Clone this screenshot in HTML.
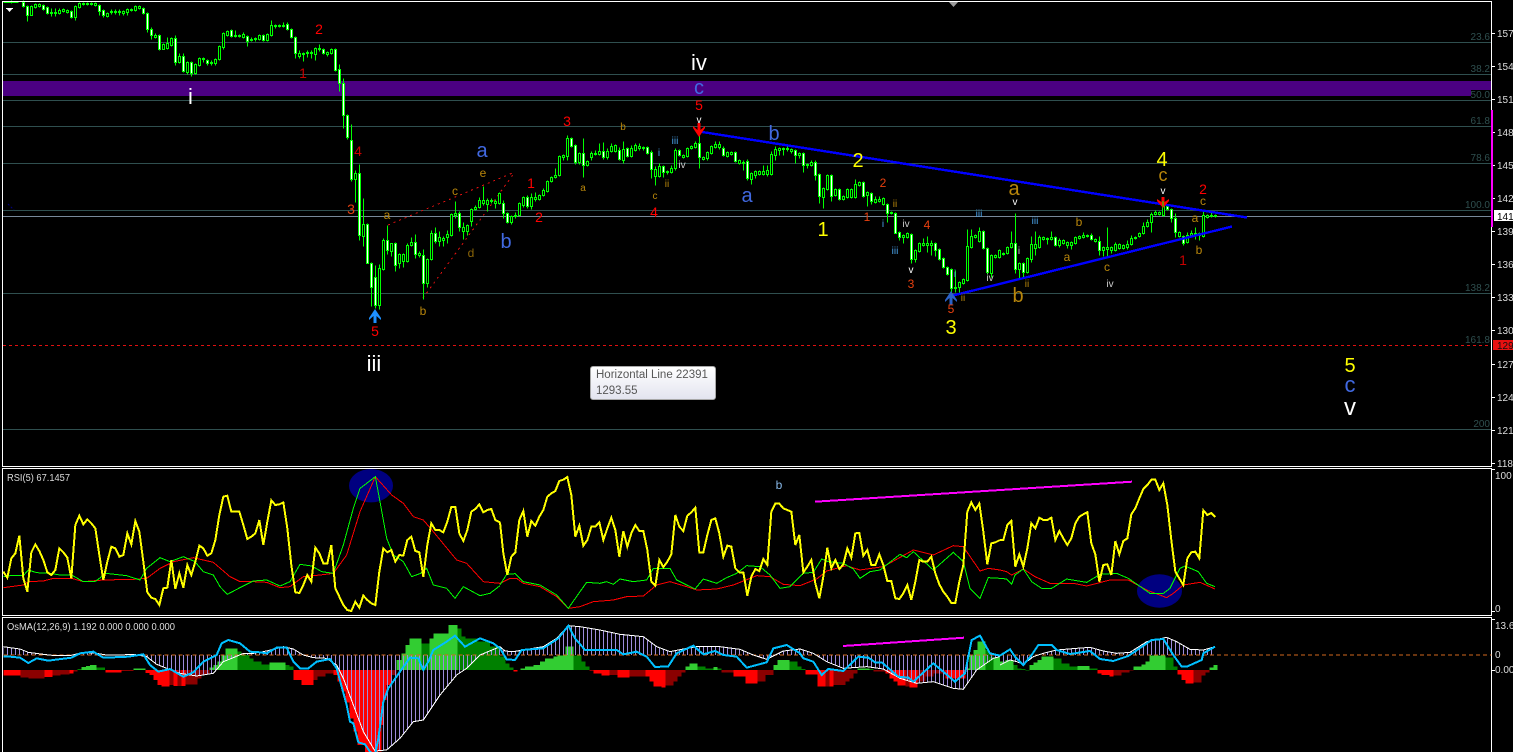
<!DOCTYPE html>
<html>
<head>
<meta charset="utf-8">
<title>Chart</title>
<style>
html,body{margin:0;padding:0;background:#000;width:1513px;height:752px;overflow:hidden}
svg{position:absolute;left:0;top:0;display:block}
text{font-family:"Liberation Sans",sans-serif;text-anchor:middle}
polyline,.al{shape-rendering:crispEdges}
.o{fill:#b8860b}.r{fill:#f00}.dr{fill:#c80000}.y{fill:#ff0}.b{fill:#4169e1}.w{fill:#fff}.lb{fill:#4aa3e8}.g{fill:#ccc}.or{fill:#e8400f}
.s10{font-size:10px}.s12{font-size:12px}.s14{font-size:14px}.s20{font-size:20px}.s22{font-size:22px}
.ax{font-size:10px;fill:#ddd;text-anchor:start}
.fb{font-size:10px;fill:#2f4f4f;text-anchor:end}
.tt{font-size:10px;fill:#ddd;text-anchor:start}
#tip{position:absolute;left:590px;top:366px;width:119px;height:32px;border:1px solid #a8a8a8;border-radius:3px;background:linear-gradient(#fff,#e3e4ef);font:11.5px/15px "Liberation Sans",sans-serif;color:#575757;padding:0 0 0 5px;box-sizing:content-box;white-space:nowrap}
#tip div{height:15px;padding-top:1px}
</style>
</head>
<body>
<svg width="1513" height="752" viewBox="0 0 1513 752" xmlns="http://www.w3.org/2000/svg">
<defs>
<pattern id="st" width="12" height="30" patternUnits="userSpaceOnUse"><rect x="9" y="0" width="3" height="30" fill="#9d8bdc"/></pattern>
</defs>
<rect width="1513" height="752" fill="#000"/>
<rect x="3" y="81" width="1488" height="15" fill="#4b0082"/>
<g stroke="#2f4f4f" shape-rendering="crispEdges">
<path d="M3 42.5H1491M3 74.5H1491M3 100.5H1491M3 126.5H1491M3 163.5H1491M3 210.5H1491M3 293.5H1491M3 429.5H1491"/>
</g>
<path d="M3 216.5H1491" stroke="#778899" shape-rendering="crispEdges"/>
<path d="M3 345.5H1491" stroke="#e01010" stroke-dasharray="3 3" shape-rendering="crispEdges"/>
<path d="M8 204L14 210" stroke="#000080" stroke-dasharray="2 2"/>
<path class="al" d="M388 225L515 172M423 298L515 172" stroke="#e01010" stroke-dasharray="2 4" fill="none"/>
<rect x="1471" y="90" width="20" height="9" fill="#000"/>

<g transform="translate(.5,.5)" shape-rendering="crispEdges" stroke="#0f0" stroke-width="1">
<path fill="none" d="M3 2H18M11 0V3M23 0V7M27 5V21M31 5V15M35 3V8M39 3V7M43 4V10M47 6V14M51 8V16M55 8V16M59 8V14M63 8V12M67 9V13M71 10V18M75 5V20M79 2V8M83 2V5M87 2V5M91 2V5M95 2V6M99 4V15M103 9V17M107 12V17M111 9V14M115 9V14M119 9V15M123 10V15M127 8V15M131 8V11M135 5V11M139 5V9M143 7V14M147 12V32M151 27V39M155 33V38M159 34V50M163 43V49M167 37V49M171 37V46M175 35V65M179 53V63M183 53V72M187 61V74M191 61V76M195 63V74M199 57V66M203 57V62M207 59V65M211 60V65M215 58V65M219 45V60M223 32V49M227 30V36M231 29V37M235 30V37M239 34V37M243 32V38M247 35V46M251 37V41M255 37V41M259 34V40M263 34V41M267 33V41M271 20V36M275 24V28M279 24V27M283 22V27M287 22V30M291 28V38M295 36V58M299 50V58M303 52V61M307 50V57M311 50V58M315 47V60M319 44V51M323 48V54M327 51V56M331 48V54M335 48V71M339 64V91M343 78V128M347 114V139M351 124V181M355 170V202M359 164V240M363 198V246M367 223V263M371 262V306M375 265V308M379 264V309M383 238V270M387 225V254M391 243V256M395 242V271M399 253V268M403 253V267M407 243V262M411 237V246M415 234V258M419 251V257M423 249V299M427 258V287M431 230V260M435 227V243M439 231V246M443 236V246M447 230V243M451 213V236M455 201V218M459 211V231M463 222V239M467 224V235M471 208V226M475 205V210M479 197V208M483 186V205M487 198V211M491 198V203M495 199V208M499 192V204"/>
<path fill="none" d="M503 200V218M507 212V223M511 215V224M515 212V218M519 202V216M523 196V207M527 195V208M531 193V209M535 192V201M539 194V200M543 188V196M547 180V192M551 176V182M555 168V178M559 155V176M563 154V160M567 135V160M571 137V147M575 144V164M579 152V164M583 138V177M587 160V166M591 151V160M595 150V155M599 143V155M603 142V159M607 148V159M611 143V152M615 144V152M619 147V160M623 141V163M627 147V157M631 145V157M635 143V151M639 143V150M643 146V150M647 146V154M651 150V178M655 166V185M659 163V177M663 165V177M667 170V174M671 165V173M675 148V170M679 149V156M683 154V158M687 147V157M691 145V149M695 141V148M699 125V168M703 156V160M707 151V160M711 145V154M715 141V148M719 141V149M723 146V156M727 151V157M731 151V155M735 151V162M739 159V164M743 160V170M747 159V180M751 172V184M755 170V178M759 170V175M763 165V175M767 165V176M771 151V175M775 146V160M779 147V155M783 147V155M787 145V151M791 148V153M795 149V163M799 152V158M803 152V172M807 163V168M811 160V166M815 160V180M819 173V203M823 187V208M827 174V190M831 174V201M835 188V196M839 188V200M843 195V200M847 188V198M851 188V198M855 179V198M859 181V186M863 181V197M867 191V206M871 192V204M875 196V203M879 196V202M883 197V205M887 203V222M891 211V214M895 212V233M899 231V240M903 234V243M907 232V238M911 233V263M915 249V262M919 242V252M923 238V246M927 236V252M931 240V255M935 242V256M939 248V260M943 257V268M947 266V275M951 268V295M955 270V292M959 281V292M963 278V284M967 229V281M971 229V248M975 234V238M979 227V242M983 230V249M987 247V274M991 254V277M995 254V258M999 249V258"/>
<path fill="none" d="M1003 252V255M1007 246V254M1011 231V248M1015 213V273M1019 262V279M1023 262V277M1027 257V273M1031 236V262M1035 231V255M1039 235V248M1043 236V240M1047 237V244M1051 231V240M1055 236V246M1059 238V247M1063 239V244M1067 241V248M1071 241V249M1075 236V244M1079 235V239M1083 232V238M1087 234V237M1091 233V240M1095 238V242M1099 236V255M1103 246V256M1107 227V258M1111 246V253M1115 242V251M1119 243V249M1123 244V249M1127 240V249M1131 235V245M1135 236V239M1139 232V237M1143 222V234M1147 219V227M1151 212V232M1155 210V215M1159 211V215M1163 200V216M1167 205V210M1171 208V222M1175 213V237M1179 231V237M1183 235V245M1187 232V243M1191 230V236M1195 227V239M1199 232V240M1203 210V237M1207 214V218M1211 212V217M1215 214V217"/>
<path fill="#000" d="M30 6h2v9h-2zM34 4h2v3h-2zM38 4h2v2h-2zM50 12h2v1h-2zM54 12h2v1h-2zM58 10h2v3h-2zM62 9h2v2h-2zM66 10h2v2h-2zM74 6h2v11h-2zM78 3h2v4h-2zM82 3h2v1h-2zM86 3h2v1h-2zM90 3h2v1h-2zM94 3h2v2h-2zM106 13h2v3h-2zM110 11h2v1h-2zM114 11h2v1h-2zM118 11h2v1h-2zM122 11h2v2h-2zM126 9h2v3h-2zM130 9h2v1h-2zM134 6h2v4h-2zM138 6h2v2h-2zM154 35h2v2h-2zM162 44h2v5h-2zM166 43h2v5h-2zM170 38h2v7h-2zM178 56h2v6h-2zM186 62h2v10h-2zM194 64h2v9h-2zM198 58h2v7h-2zM202 58h2v1h-2zM210 62h2v1h-2zM214 59h2v4h-2zM218 46h2v13h-2zM222 33h2v14h-2zM226 31h2v4h-2zM234 35h2v1h-2zM238 35h2v1h-2zM242 34h2v3h-2zM250 39h2v1h-2zM254 38h2v1h-2zM258 35h2v4h-2zM266 34h2v6h-2zM270 25h2v10h-2zM274 25h2v1h-2zM278 25h2v1h-2zM282 25h2v1h-2zM298 53h2v3h-2zM302 53h2v1h-2zM306 52h2v1h-2zM310 52h2v1h-2zM314 48h2v6h-2zM318 48h2v1h-2zM326 52h2v2h-2zM330 49h2v4h-2zM354 173h2v6h-2zM362 224h2v12h-2zM378 268h2v37h-2zM382 240h2v29h-2zM390 243h2v8h-2zM398 254h2v9h-2zM402 254h2v7h-2zM406 245h2v16h-2zM410 242h2v3h-2zM418 253h2v2h-2zM426 259h2v24h-2zM430 233h2v26h-2zM438 237h2v4h-2zM442 238h2v2h-2zM446 234h2v3h-2zM450 214h2v21h-2zM454 213h2v2h-2zM462 227h2v4h-2zM466 225h2v6h-2zM470 209h2v12h-2zM474 207h2v2h-2zM478 200h2v7h-2zM482 200h2v3h-2zM486 200h2v4h-2zM490 200h2v1h-2zM494 201h2v2h-2zM498 193h2v10h-2z"/>
<path fill="#000" d="M510 216h2v6h-2zM514 215h2v1h-2zM518 203h2v12h-2zM522 197h2v8h-2zM530 197h2v9h-2zM534 197h2v2h-2zM538 195h2v4h-2zM542 190h2v5h-2zM546 181h2v10h-2zM550 177h2v4h-2zM554 175h2v2h-2zM558 156h2v19h-2zM562 155h2v2h-2zM566 138h2v18h-2zM578 153h2v9h-2zM586 161h2v4h-2zM590 153h2v4h-2zM594 153h2v1h-2zM598 151h2v3h-2zM606 151h2v6h-2zM610 146h2v5h-2zM614 145h2v6h-2zM622 149h2v11h-2zM630 148h2v8h-2zM634 145h2v5h-2zM638 146h2v2h-2zM642 147h2v1h-2zM654 169h2v7h-2zM658 166h2v10h-2zM666 171h2v1h-2zM670 168h2v4h-2zM674 150h2v18h-2zM682 155h2v2h-2zM686 148h2v8h-2zM690 146h2v2h-2zM694 143h2v4h-2zM702 157h2v2h-2zM706 152h2v6h-2zM710 146h2v7h-2zM714 144h2v3h-2zM718 144h2v3h-2zM726 152h2v4h-2zM730 152h2v2h-2zM738 160h2v3h-2zM742 162h2v1h-2zM750 173h2v6h-2zM754 171h2v4h-2zM758 171h2v3h-2zM762 171h2v3h-2zM766 170h2v4h-2zM770 154h2v20h-2zM774 149h2v6h-2zM778 148h2v2h-2zM782 148h2v1h-2zM786 148h2v1h-2zM790 149h2v2h-2zM798 153h2v2h-2zM806 164h2v1h-2zM810 162h2v3h-2zM822 188h2v9h-2zM826 175h2v14h-2zM834 189h2v6h-2zM842 196h2v3h-2zM846 189h2v8h-2zM850 189h2v8h-2zM854 184h2v13h-2zM858 182h2v3h-2zM866 192h2v3h-2zM874 199h2v3h-2zM878 199h2v2h-2zM882 198h2v6h-2zM890 212h2v1h-2zM902 235h2v2h-2zM906 233h2v4h-2zM914 250h2v9h-2zM918 243h2v8h-2zM922 243h2v2h-2zM926 243h2v2h-2zM930 243h2v2h-2zM954 287h2v1h-2zM958 282h2v5h-2zM962 279h2v4h-2zM966 246h2v34h-2zM970 236h2v11h-2zM974 235h2v2h-2zM978 231h2v10h-2zM990 255h2v18h-2zM994 255h2v2h-2zM998 250h2v7h-2z"/>
<path fill="#000" d="M1002 253h2v1h-2zM1006 247h2v6h-2zM1010 243h2v4h-2zM1018 263h2v6h-2zM1026 258h2v14h-2zM1030 244h2v15h-2zM1034 244h2v4h-2zM1038 237h2v10h-2zM1042 237h2v2h-2zM1046 238h2v1h-2zM1050 237h2v2h-2zM1058 240h2v5h-2zM1062 240h2v3h-2zM1066 242h2v3h-2zM1070 242h2v3h-2zM1074 237h2v6h-2zM1078 236h2v2h-2zM1082 235h2v2h-2zM1086 235h2v1h-2zM1094 239h2v2h-2zM1102 247h2v3h-2zM1106 247h2v2h-2zM1110 247h2v3h-2zM1114 244h2v6h-2zM1118 244h2v4h-2zM1122 245h2v3h-2zM1126 244h2v3h-2zM1130 238h2v6h-2zM1134 237h2v1h-2zM1138 233h2v3h-2zM1142 226h2v7h-2zM1146 222h2v4h-2zM1150 214h2v8h-2zM1154 212h2v2h-2zM1158 212h2v2h-2zM1162 206h2v9h-2zM1178 232h2v4h-2zM1186 235h2v7h-2zM1190 233h2v2h-2zM1194 233h2v1h-2zM1198 233h2v2h-2zM1202 215h2v21h-2zM1206 215h2v2h-2zM1210 215h2v1h-2zM1214 215h2v1h-2z"/>
<path fill="#fff" d="M22 2h2v4h-2zM26 6h2v9h-2zM42 5h2v4h-2zM46 7h2v6h-2zM70 11h2v6h-2zM98 5h2v6h-2zM102 10h2v5h-2zM142 8h2v5h-2zM146 13h2v16h-2zM150 29h2v6h-2zM158 35h2v14h-2zM174 38h2v24h-2zM182 56h2v15h-2zM190 62h2v11h-2zM206 60h2v3h-2zM230 30h2v6h-2zM246 36h2v5h-2zM262 35h2v5h-2zM286 24h2v5h-2zM290 29h2v8h-2zM294 37h2v16h-2zM322 49h2v4h-2zM334 49h2v21h-2zM338 69h2v14h-2zM342 83h2v32h-2zM346 115h2v22h-2zM350 140h2v39h-2zM358 173h2v62h-2zM366 224h2v39h-2zM370 263h2v24h-2zM374 277h2v28h-2zM386 240h2v10h-2zM394 243h2v22h-2zM414 242h2v12h-2zM422 255h2v28h-2zM434 233h2v8h-2zM458 213h2v14h-2zM502 203h2v10h-2zM506 213h2v9h-2zM526 197h2v9h-2zM570 138h2v8h-2zM574 145h2v17h-2zM582 153h2v12h-2zM602 151h2v6h-2zM618 150h2v9h-2zM626 148h2v8h-2zM646 147h2v6h-2zM650 152h2v17h-2zM662 166h2v6h-2zM678 150h2v5h-2zM698 143h2v14h-2zM722 148h2v7h-2zM734 152h2v9h-2zM746 161h2v17h-2zM794 150h2v5h-2zM802 153h2v12h-2zM814 162h2v13h-2zM818 174h2v22h-2zM830 175h2v21h-2zM838 189h2v10h-2zM862 182h2v14h-2zM870 193h2v8h-2zM886 204h2v9h-2zM894 213h2v20h-2zM898 232h2v5h-2zM910 234h2v25h-2zM934 243h2v7h-2zM938 249h2v10h-2zM942 258h2v9h-2zM946 267h2v7h-2zM950 269h2v19h-2zM982 231h2v17h-2zM986 248h2v24h-2zM1014 243h2v26h-2zM1022 263h2v9h-2zM1054 237h2v8h-2zM1090 235h2v4h-2zM1098 241h2v9h-2zM1166 206h2v3h-2zM1170 209h2v9h-2zM1174 218h2v14h-2zM1182 236h2v7h-2z"/>
</g>

<path class="al" d="M699 131.5L1247 217.5" stroke="#0000ff" stroke-width="2.4" fill="none"/>
<path class="al" d="M951 296L1232 226.5" stroke="#0000ff" stroke-width="2.4" fill="none"/>

<!-- arrows -->
<path d="M375 309L381 318V320L376.5 316V323H373.5V316L369 320V318Z" fill="#1e90ff"/>
<path d="M951 291L957 300V302L952.5 298V305H949.5V298L945 302V300Z" fill="#2a62c8"/>
<path d="M699 137L693 128V126L697.5 130V123H700.5V130L705 126V128Z" fill="#f00"/>
<path d="M1163 208L1157 201V199L1161.5 202V197H1164.5V202L1169 199V201Z" fill="#f00"/>
<path d="M1163 206.5V201" stroke="#0f0"/>

<!-- big labels -->
<text x="190.500" y="104" class="w s22">i</text>
<text x="699" y="70" class="w s22">iv</text>
<text x="374" y="371" class="w s22">iii</text>
<text x="1350" y="415" class="w" font-size="24">v</text>
<text x="1350" y="392" class="b s22">c</text>
<text x="1350" y="372" class="y s20">5</text>
<text x="699" y="94" class="b s20">c</text>
<text x="699" y="110" class="r s14">5</text>
<text x="699" y="123" class="w s10">v</text>
<text x="567" y="126" class="r s14">3</text>
<text x="623" y="130" class="o s10">b</text>
<text x="675" y="144" class="lb s10">iii</text>
<text x="659" y="156" class="lb s10">i</text>
<text x="682" y="168" class="g s10">iv</text>
<text x="667" y="187" class="o s10">ii</text>
<text x="655" y="199" class="o s10">c</text>
<text x="654" y="217" class="r s14">4</text>
<text x="531" y="188" class="r s14">1</text>
<text x="539" y="222" class="r s14">2</text>
<text x="583" y="191" class="o s10">a</text>
<text x="506" y="248" class="b s20">b</text>
<text x="482" y="157" class="b s20">a</text>
<text x="483" y="177" class="o s12">e</text>
<text x="455" y="195" class="o s12">c</text>
<text x="387" y="219" class="o s12">a</text>
<text x="471" y="257" class="s12" fill="#8b6508">d</text>
<text x="423" y="315" class="o s12">b</text>
<text x="375" y="336" class="r s14">5</text>
<text x="319" y="34" class="r s14">2</text>
<text x="303" y="78" class="dr s14">1</text>
<text x="358" y="156" class="dr s14">4</text>
<text x="351" y="214" class="or s14">3</text>
<text x="774" y="140" class="b s20">b</text>
<text x="747" y="202" class="b s20">a</text>
<text x="858" y="167" class="y s20">2</text>
<text x="823" y="236" class="y s20">1</text>
<text x="883" y="187" class="or s12">2</text>
<text x="895" y="207" class="o s10">ii</text>
<text x="867" y="221" class="or s12">1</text>
<text x="883" y="227" class="lb s10">i</text>
<text x="906" y="227" class="g s10">iv</text>
<text x="927" y="229" class="or s12">4</text>
<text x="895" y="254" class="lb s10">iii</text>
<text x="911" y="273" class="w s10">v</text>
<text x="911" y="288" class="or s12">3</text>
<text x="979" y="217" class="lb s10">iii</text>
<text x="955" y="277" class="lb s10">i</text>
<text x="963" y="301" class="o s10">ii</text>
<text x="990" y="281" class="g s10">iv</text>
<text x="951" y="313" class="or s12">5</text>
<text x="951" y="334" class="y s20">3</text>
<text x="1014" y="195" class="o s20">a</text>
<text x="1015" y="205" class="w s10">v</text>
<text x="1035" y="224" class="lb s10">iii</text>
<text x="1019" y="254" class="g s10">i</text>
<text x="1027" y="287" class="o s10">ii</text>
<text x="1018" y="302" class="o s20">b</text>
<text x="1079" y="226" class="o s12">b</text>
<text x="1067" y="261" class="o s12">a</text>
<text x="1107" y="271" class="o s12">c</text>
<text x="1110" y="287" class="g s10">iv</text>
<text x="1162" y="166" class="y s20">4</text>
<text x="1163" y="181" class="o" font-size="18">c</text>
<text x="1163" y="194" class="w s10">v</text>
<text x="1203" y="194" class="r s14">2</text>
<text x="1203" y="205" class="o s12">c</text>
<text x="1195" y="222" class="o s12">a</text>
<text x="1199" y="254" class="o s12">b</text>
<text x="1183" y="265" class="dr s14">1</text>

<!-- fib labels -->
<text x="1490" y="40" class="fb">23.6</text>
<text x="1490" y="72" class="fb">38.2</text>
<text x="1490" y="98" class="fb">50.0</text>
<text x="1490" y="124" class="fb">61.8</text>
<text x="1490" y="161" class="fb">78.6</text>
<text x="1490" y="208" class="fb">100.0</text>
<text x="1490" y="291" class="fb">138.2</text>
<text x="1490" y="343" class="fb">161.8</text>
<text x="1490" y="427" class="fb">200</text>

<!-- top markers -->
<path d="M6 8H13L9.500 12Z" fill="#fff"/>
<path d="M6 8.500H13" stroke="#fff"/>
<path d="M948 1H959L953.500 7Z" fill="#999"/>

<!-- frames -->
<g stroke="#fff" fill="none" shape-rendering="crispEdges">
<path d="M2.500 1.500H1491.500V466.500H2.500Z"/>
<path d="M2.500 468.500H1491.500V615.500H2.500Z"/>
<path d="M2.500 752V617.500H1491.500V752"/>
<path d="M1492 33.500h3M1492 66.500h3M1492 99.500h3M1492 132.500h3M1492 165.500h3M1492 198.500h3M1492 231.500h3M1492 264.500h3M1492 297.500h3M1492 330.500h3M1492 364.500h3M1492 397.500h3M1492 430.500h3M1492 463.500h3M1492 469.500h3M1492 611.500h3M1492 619.500h3M1492 670.500h3"/>
</g>
<rect x="1491" y="110" width="2" height="117" fill="#f0f"/>

<!-- axis -->
<text x="1497" y="37" class="ax">1570</text>
<text x="1497" y="70" class="ax">1540</text>
<text x="1497" y="103" class="ax">1517</text>
<text x="1497" y="136" class="ax">1487</text>
<text x="1497" y="169" class="ax">1457</text>
<text x="1497" y="202" class="ax">1427</text>
<rect x="1494" y="210" width="19" height="11" fill="#fff"/>
<text x="1497" y="220" class="ax" style="fill:#000">1411</text>
<text x="1497" y="235" class="ax">1397</text>
<text x="1497" y="268" class="ax">1367</text>
<text x="1497" y="301" class="ax">1337</text>
<text x="1497" y="334" class="ax">1307</text>
<rect x="1493" y="340" width="20" height="10" fill="#e81010"/>
<text x="1497" y="349" class="ax" style="fill:#111">1293</text>
<text x="1497" y="368" class="ax">1277</text>
<text x="1497" y="401" class="ax">1247</text>
<text x="1497" y="434" class="ax">1217</text>
<text x="1497" y="467" class="ax">1187</text>
<text x="1495" y="479" class="ax">100</text>
<text x="1495" y="612" class="ax">0</text>
<text x="1495" y="629" class="ax">13.6</text>
<text x="1495" y="658" class="ax">0</text>
<text x="1495" y="673" class="ax">0.000</text>

<text x="7" y="481" class="tt" textLength="63" lengthAdjust="spacingAndGlyphs">RSI(5) 67.1457</text>
<text x="7" y="630" class="tt" textLength="168" lengthAdjust="spacingAndGlyphs">OsMA(12,26,9) 1.192 0.000 0.000 0.000</text>
<text x="779" y="489" class="s12" fill="#87b8e8">b</text>

<!-- blue ellipses -->
<ellipse cx="371" cy="485.700" rx="22" ry="16.700" fill="#000080"/>
<ellipse cx="1159.500" cy="591" rx="22.500" ry="16.700" fill="#000080"/>

<path class="al" d="M815 501.700L1132 481.700M843 646L964 637.700" stroke="#f0f" stroke-width="2" fill="none"/>

<!-- RSI & OsMA zoom-space sections -->
<g transform="translate(0,465) scale(.33333)" fill="none">
<g shape-rendering="crispEdges">
<path fill="#f00" d="M10 615H62V632H10zM134 615H158V636H134zM208 615H220V626H208zM316 615H364V622H316zM436 615H448V624H436zM448 615H460V630H448zM460 615H472V645H460zM472 615H484V660H472zM484 615H508V665H484zM520 615H532V663H520zM544 615H556V663H544zM880 615H904V645H880zM904 615H940V660H904zM1000 615H1012V630H1000zM1012 615H1024V650H1012zM1024 615H1036V680H1024zM1036 615H1048V712H1036zM1048 615H1060V760H1048zM1060 615H1072V800H1060zM1072 615H1095V840H1072zM1095 615H1132V861H1095zM1132 615H1145V860H1132zM1145 615H1152V780H1145zM1152 615H1160V705H1152zM1160 615H1175V660H1160z"/>
<path fill="#8b0000" d="M62 615H86V637H62zM86 615H134V640H86zM158 615H182V632H158zM182 615H208V628H182zM220 615H232V620H220zM364 615H400V618H364zM508 615H520V660H508zM532 615H544V663H532zM556 615H592V658H556zM592 615H604V640H592zM604 615H628V628H604zM940 615H952V645H940zM952 615H976V635H952zM976 615H1000V625H976zM1175 615H1190V630H1175z"/>
<path fill="#32cd32" d="M245 615V606H258V603H270V600H290V615zM400 615V610H436V615zM628 615V608H640V600H652V590H664V572H676V550H712V615zM808 615V592H856V615zM1190 615V585H1204V565H1216V540H1228V520H1264V615zM1288 615V520H1300V505H1345V480H1372V615z"/>
<path fill="#008000" d="M232 615V612H245V615zM290 615V608H315V615zM712 615V560H724V565H736V570H748V580H760V590H784V598H808V615zM856 615V600H868V605H880V615zM1264 615V535H1288V615zM1372 615V490H1384V515H1396V520H1432V530H1470V545H1500V615z"/>
</g>
<polygon fill="url(#st)" stroke="none" points="10,545 30,548 60,552 85,562 130,568 165,572 210,572 250,562 290,565 320,570 360,570 400,568 440,575 470,598 500,610 540,625 590,633 640,625 670,590 700,578 730,565 760,565 800,558 850,545 880,552 910,570 940,578 980,580 1010,600 1030,640 1060,720 1090,800 1125,858 1160,855 1200,820 1240,770 1270,765 1320,690 1370,630 1400,610 1440,570 1500,545 1500,570 10,570" shape-rendering="crispEdges"/>
<path d="M10 570.500H1500" stroke="#d2691e" stroke-width="3" stroke-dasharray="12 9" class="al"/>
<polyline stroke="#fff" stroke-width="3" points="10,545 30,548 60,552 85,562 130,568 165,572 210,572 250,562 290,565 320,570 360,570 400,568 440,575 470,598 500,610 540,625 590,633 640,625 670,590 700,578 730,565 760,565 800,558 850,545 880,552 910,570 940,578 980,580 1010,600 1030,640 1060,720 1090,800 1125,858 1160,855 1200,820 1240,770 1270,765 1320,690 1370,630 1400,610 1440,570 1500,545"/>
<polyline stroke="#00bfff" stroke-width="6" points="10,575 30,575 60,578 85,594 110,580 145,587 175,583 215,578 240,565 280,560 310,578 340,577 385,575 430,568 450,600 475,620 510,612 550,635 580,622 610,590 650,570 665,535 685,525 720,535 750,560 780,562 800,565 830,548 860,548 880,590 900,610 925,610 950,590 990,582 1010,610 1040,720 1050,770 1060,775 1075,832 1095,838 1110,860 1125,870 1135,820 1150,710 1165,670 1200,620 1230,578 1255,580 1270,615 1285,590 1300,555 1340,530 1365,512 1395,545 1440,520 1480,535 1500,550"/>
<polyline stroke="#f00" stroke-width="3" points="10,368 70,360 85,350 130,348 160,340 215,340 250,350 310,345 400,343 440,340 480,310 520,290 580,278 640,292 690,335 720,350 760,350 800,352 840,368 870,365 910,335 960,330 1000,325 1040,270 1080,140 1126,35 1175,90 1210,115 1240,155 1270,165 1300,200 1370,285 1400,295 1450,350 1500,355"/>
<polyline stroke="#0f0" stroke-width="3" points="10,335 30,332 70,332 85,315 110,323 150,325 180,330 215,330 250,350 285,350 318,325 380,332 420,345 440,310 480,278 510,290 550,275 585,290 610,320 640,330 660,365 682,388 720,368 760,348 800,345 840,363 870,350 900,298 935,303 965,320 1000,325 1030,240 1060,130 1080,70 1100,55 1126,35 1140,110 1160,220 1180,270 1210,290 1235,335 1262,325 1280,310 1300,360 1340,370 1365,400 1390,365 1440,392 1470,385 1500,362"/>
<polyline stroke="#ff0" stroke-width="6" points="10,320 22,338 34,280 46,265 58,212 70,340 82,380 94,262 106,238 118,258 130,285 142,322 154,330 166,315 178,250 190,262 202,278 214,340 226,180 238,152 250,178 262,163 274,175 286,190 298,270 310,345 322,290 334,245 346,250 358,275 370,270 382,205 394,238 406,168 418,200 430,290 442,382 454,398 466,402 478,420 490,370 502,368 514,285 526,372 538,325 550,368 562,300 574,330 586,290 598,242 610,250 622,272 634,265 646,225 658,150 670,95 682,92 694,140 706,140 718,140 730,180 742,222 754,215 766,205 778,165 790,240 802,170 814,106 826,120 838,118 850,112 862,190 874,300 886,382 898,384 910,360 922,330 934,350 946,248 958,265 970,295 982,295 994,240 1006,370 1018,395 1030,420 1042,435 1054,438 1066,410 1078,428 1090,392 1102,405 1114,415 1126,420 1138,320 1150,250 1162,262 1174,255 1186,290 1198,270 1210,272 1222,225 1234,215 1246,258 1258,262 1270,335 1282,240 1294,175 1306,195 1318,195 1330,202 1342,170 1354,126 1366,126 1378,205 1390,228 1402,195 1414,140 1426,132 1438,118 1450,142 1462,135 1474,132 1486,165 1500,172"/>
</g>

<g transform="translate(500,465) scale(.33333)" fill="none">
<g shape-rendering="crispEdges">
<path fill="#f00" d="M40 615H52V620H40zM268 615H280V617H268zM280 615H304V625H280zM304 615H328V632H304zM352 615H388V638H352zM436 615H448V635H436zM448 615H460V650H448zM460 615H484V665H460zM484 615H496V668H484zM700 615H736V635H700zM736 615H772V655H736zM916 615H952V628H916zM952 615H976V665H952zM988 615H1000V665H988zM1156 615H1168V625H1156zM1168 615H1180V640H1168zM1180 615H1192V650H1180zM1192 615H1216V662H1192zM1228 615H1252V668H1228zM1336 615H1396V640H1336z"/>
<path fill="#8b0000" d="M328 615H352V630H328zM388 615H436V635H388zM496 615H520V662H496zM520 615H532V650H520zM532 615H544V635H532zM544 615H556V622H544zM664 615H700V622H664zM772 615H796V650H772zM796 615H820V630H796zM976 615H988V665H976zM1000 615H1036V660H1000zM1036 615H1048V650H1036zM1048 615H1060V640H1048zM1060 615H1072V625H1060zM1120 615H1156V620H1120zM1216 615H1228V665H1216zM1252 615H1276V650H1252zM1276 615H1300V635H1276zM1300 615H1336V625H1300z"/>
<path fill="#32cd32" d="M62 615V610H75V605H100V600H120V590H135V580H160V575H172V572H196V545H220V615zM556 615V605H568V595H592V615zM640 615V606H652V615zM820 615V600H832V585H868V615zM1072 615V610H1108V615zM1396 615V610H1408V572H1420V555H1432V530H1456V615zM1480 615V578H1500V615z"/>
<path fill="#008000" d="M0 615V575H16V595H28V608H40V615zM220 615V572H244V590H256V605H268V615zM592 615V605H616V610H640V615zM652 615V610H664V615zM868 615V590H892V605H904V612H916V615zM1108 615V612H1120V615zM1456 615V555H1468V575H1480V615z"/>
</g>
<polygon fill="url(#st)" stroke="none" points="0,545 15,558 40,560 70,555 130,545 170,520 205,482 240,485 300,495 360,508 430,515 470,545 510,560 550,552 590,545 660,545 720,553 760,570 800,583 850,558 900,552 940,565 980,590 1030,610 1100,605 1150,612 1200,640 1250,655 1300,650 1360,670 1390,673 1430,615 1480,580 1500,575 1500,570 0,570" shape-rendering="crispEdges"/>
<path d="M0 570.500H1500" stroke="#d2691e" stroke-width="3" stroke-dasharray="12 9" class="al"/>
<polyline stroke="#fff" stroke-width="3" points="0,545 15,558 40,560 70,555 130,545 170,520 205,482 240,485 300,495 360,508 430,515 470,545 510,560 550,552 590,545 660,545 720,553 760,570 800,583 850,558 900,552 940,565 980,590 1030,610 1100,605 1150,612 1200,640 1250,655 1300,650 1360,670 1390,673 1430,615 1480,580 1500,575"/>
<polyline stroke="#00bfff" stroke-width="6" points="0,550 20,583 45,585 65,555 130,550 175,520 205,482 225,520 255,555 350,555 370,568 410,560 440,575 465,606 505,604 530,565 580,542 610,568 645,558 670,570 710,575 740,608 800,592 820,550 860,540 900,565 910,580 940,590 965,630 985,612 1030,618 1075,575 1105,578 1125,592 1145,592 1195,635 1225,638 1240,650 1300,595 1365,650 1395,625 1415,525 1440,512 1470,565 1500,572"/>
<polyline stroke="#f00" stroke-width="3" points="0,355 30,340 50,340 70,355 120,365 170,395 205,430 240,425 280,410 340,405 380,395 430,393 470,360 510,350 560,365 590,375 650,372 700,360 770,332 810,335 850,358 900,362 950,342 980,318 1040,302 1080,315 1150,305 1240,255 1300,270 1360,242 1390,245 1440,318 1465,310 1500,315"/>
<polyline stroke="#0f0" stroke-width="3" points="0,360 20,328 45,326 70,350 120,360 170,390 205,430 240,380 260,352 300,355 320,350 340,358 360,342 400,350 440,345 460,310 510,310 530,345 585,372 610,342 650,355 680,338 710,325 740,302 780,305 810,330 840,370 870,365 910,325 940,322 965,282 985,290 1030,295 1060,312 1080,340 1110,320 1140,315 1200,268 1220,278 1240,260 1300,315 1360,262 1390,290 1410,370 1440,400 1465,338 1500,340"/>
<polyline stroke="#ff0" stroke-width="6" points="0,172 10,265 22,330 34,275 46,262 58,165 70,138 82,215 94,168 106,182 118,155 130,135 142,95 154,85 166,78 178,48 190,44 202,36 214,90 226,215 238,182 250,242 262,225 274,185 286,185 298,172 310,225 322,190 334,158 346,195 358,275 370,198 382,245 394,205 406,180 418,198 430,198 442,255 454,350 466,362 478,285 490,306 502,290 514,268 526,150 538,185 550,198 562,152 574,142 586,128 598,262 610,262 622,210 634,165 646,160 658,205 670,275 682,242 694,245 706,310 718,322 730,322 742,392 754,335 766,312 778,318 790,282 802,300 814,140 826,116 838,116 850,130 862,135 874,140 886,240 898,210 910,322 922,305 934,285 946,355 958,400 970,335 982,248 994,310 1006,285 1018,312 1030,298 1042,250 1054,278 1066,205 1078,204 1090,272 1102,255 1114,300 1126,300 1138,268 1150,300 1162,348 1174,348 1186,400 1198,402 1210,385 1222,360 1234,405 1246,350 1258,285 1270,290 1282,290 1294,275 1306,325 1318,358 1330,380 1342,395 1354,414 1366,414 1378,350 1390,300 1402,140 1414,112 1426,135 1438,116 1450,200 1462,298 1474,235 1486,232 1500,225"/>
</g>

<g transform="translate(1000,465) scale(.33333)" fill="none">
<g shape-rendering="crispEdges">
<path fill="#f00" d="M292 615H304V625H292zM304 615H328V630H304zM328 615H340V635H328zM532 615H544V628H532zM544 615H556V645H544zM556 615H580V655H556z"/>
<path fill="#8b0000" d="M340 615H364V632H340zM364 615H388V622H364zM388 615H400V617H388zM580 615H604V652H580zM604 615H616V632H604zM616 615H628V622H616z"/>
<path fill="#32cd32" d="M0 615V590H16V585H40V615zM88 615V600H100V592H112V585H124V575H160V615zM232 615V603H268V615zM400 615V605H424V598H436V590H448V572H496V615zM628 615V608H640V600H652V615z"/>
<path fill="#008000" d="M40 615V600H52V610H64V612H76V617H88V615zM160 615V580H184V595H208V605H232V615zM268 615V610H292V615zM496 615V578H520V605H532V615z"/>
</g>
<polygon fill="url(#st)" stroke="none" points="0,600 30,585 50,590 70,598 100,575 130,565 170,555 230,550 270,547 310,558 350,565 390,562 440,530 500,517 530,530 570,553 610,555 645,545 645,570 0,570" shape-rendering="crispEdges"/>
<path d="M0 570.500H1475" stroke="#d2691e" stroke-width="3" stroke-dasharray="12 9" class="al"/>
<polyline stroke="#fff" stroke-width="3" points="0,600 30,585 50,590 70,598 100,575 130,565 170,555 230,550 270,547 310,558 350,565 390,562 440,530 500,517 530,530 570,553 610,555 645,545"/>
<polyline stroke="#00bfff" stroke-width="6" points="0,572 30,553 45,575 70,600 95,570 115,540 155,540 170,555 210,567 270,558 300,582 340,588 385,573 455,525 490,522 520,570 545,605 560,605 605,585 610,565 645,545"/>
<polyline stroke="#f00" stroke-width="3" points="0,315 20,320 35,330 70,312 105,335 150,355 220,355 260,363 330,345 385,345 440,375 500,398 520,385 550,360 600,352 645,372"/>
<polyline stroke="#0f0" stroke-width="3" points="0,340 20,342 35,358 45,330 70,312 95,350 125,370 155,370 200,342 260,352 300,328 350,325 385,340 450,385 490,385 510,370 540,310 555,303 595,320 620,355 645,365"/>
<polyline stroke="#ff0" stroke-width="6" points="0,225 10,225 22,180 34,168 46,305 58,268 70,305 82,250 94,175 106,190 118,158 130,165 142,165 154,158 166,225 178,198 190,220 202,240 214,220 226,175 238,155 250,148 262,142 274,235 286,268 298,350 310,300 322,298 334,330 346,228 358,268 370,228 382,220 394,148 406,130 418,100 430,72 442,60 454,44 466,44 478,75 490,55 502,120 514,225 526,320 538,340 550,360 562,280 574,262 586,260 598,280 610,136 622,150 634,144 646,156"/>
</g>
</svg>
<div id="tip"><div>Horizontal Line 22391</div><div>1293.55</div></div>
</body>
</html>
